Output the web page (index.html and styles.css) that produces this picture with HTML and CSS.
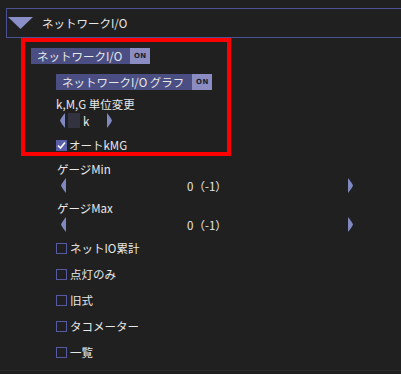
FILE: index.html
```html
<!DOCTYPE html>
<html lang="ja">
<head>
  <meta charset="UTF-8">
  <title>ネットワークI/O</title>
  <link rel="stylesheet" href="styles.css">
</head>
<body>
  <div class="panel">
    <div class="section-header">
      <svg class="caret" viewBox="0 0 25 12"><polygon points="0,0 25,0 12.5,12"/></svg>
      <span>ネットワークI/O</span>
    </div>

    <div class="section-body">
      <div class="toggle">
        <span class="toggle-label">ネットワークI/O</span>
        <span class="toggle-on">ON</span>
      </div>

      <div class="indent">
        <div class="toggle toggle-sub">
          <span class="toggle-label">ネットワークI/O グラフ</span>
          <span class="toggle-on">ON</span>
        </div>

        <div class="label unit-label">k,M,G 単位変更</div>
        <div class="selector">
          <svg class="arrow" viewBox="0 0 5 15"><path d="M5 0 L5 15 Q1 10 0 7.5 Q1 5 5 0Z"/></svg>
          <span class="swatch"></span>
          <span class="selector-value">k</span>
          <svg class="arrow" viewBox="0 0 5 15"><path d="M0 0 L0 15 Q4 10 5 7.5 Q4 5 0 0Z"/></svg>
        </div>

        <div class="check-row check-auto">
          <span class="check checked">
            <svg viewBox="0 0 11 11"><path d="M2 5.5 L4.5 8 L9 2.5" fill="none" stroke="#fff" stroke-width="1.6"/></svg>
          </span>
          <span>オートkMG</span>
        </div>

        <div class="label gauge-label">ゲージMin</div>
        <div class="slider">
          <svg class="arrow" viewBox="0 0 5 15"><path d="M5 0 L5 15 Q1 10 0 7.5 Q1 5 5 0Z"/></svg>
          <span class="slider-value">0（-1）</span>
          <svg class="arrow" viewBox="0 0 5 15"><path d="M0 0 L0 15 Q4 10 5 7.5 Q4 5 0 0Z"/></svg>
        </div>

        <div class="label gauge-label gauge-max">ゲージMax</div>
        <div class="slider">
          <svg class="arrow" viewBox="0 0 5 15"><path d="M5 0 L5 15 Q1 10 0 7.5 Q1 5 5 0Z"/></svg>
          <span class="slider-value">0（-1）</span>
          <svg class="arrow" viewBox="0 0 5 15"><path d="M0 0 L0 15 Q4 10 5 7.5 Q4 5 0 0Z"/></svg>
        </div>

        <div class="check-list">
          <div class="check-row"><span class="check"></span><span>ネットIO累計</span></div>
          <div class="check-row"><span class="check"></span><span>点灯のみ</span></div>
          <div class="check-row"><span class="check"></span><span>旧式</span></div>
          <div class="check-row"><span class="check"></span><span>タコメーター</span></div>
          <div class="check-row"><span class="check"></span><span>一覧</span></div>
        </div>
      </div>
    </div>

    <div class="footer-line"></div>

    <!-- annotation frame -->
    <div class="highlight"></div>
  </div>
</body>
</html>
```

FILE: styles.css
```css
* {
  margin: 0;
  padding: 0;
  box-sizing: border-box;
}

body {
  background-color: #202020;
  color: #e8e8e8;
  font-family: "Noto Sans CJK JP", "Noto Sans", sans-serif;
  font-size: 11.5px;
  line-height: 16px;
  overflow: hidden;
}

.panel {
  position: relative;
  height: 374px;
  padding-top: 8px;
}

/* Section header */
.section-header {
  display: flex;
  align-items: center;
  gap: 9px;
  height: 30px;
  margin-left: 6px;
  padding-left: 1px;
  border: 1px solid #4b5294;
  border-right: none;
  color: #e8e8e8;
}

.caret {
  width: 25px;
  height: 12px;
  fill: #8b8fc7;
}

.section-body {
  padding-left: 31px;
  padding-top: 10px;
}

/* ON toggles */
.toggle {
  display: flex;
  height: 16px;
}

.toggle-label {
  background-color: #4a4e82;
  padding: 0 8px 0 6px;
  line-height: 16px;
}

.toggle-on {
  width: 20px;
  background-color: #8a8cc2;
  color: #1e1e2a;
  font-family: "DejaVu Sans", sans-serif;
  font-weight: 700;
  font-size: 7px;
  letter-spacing: 0.5px;
  text-align: center;
  line-height: 17px;
}

.indent {
  padding-left: 25px;
}

.toggle-sub {
  margin-top: 10px;
}

.label {
  height: 16px;
}

.unit-label {
  margin-top: 6px;
}

/* Unit selector */
.selector {
  display: flex;
  align-items: center;
  height: 15px;
  margin-top: 1px;
  padding-left: 4px;
}

.arrow {
  width: 5px;
  height: 15px;
  fill: #8088c0;
}

.swatch {
  width: 12px;
  height: 15px;
  margin-left: 3px;
  background-color: #33333f;
}

.selector-value {
  width: 27px;
  padding-left: 3px;
}

/* Checkboxes */
.check-row {
  display: flex;
  align-items: center;
  gap: 3px;
  height: 26px;
}

.check-auto {
  height: 16px;
  margin-top: 9px;
  gap: 2px;
}

.check {
  width: 11px;
  height: 11px;
  border: 1px solid #555aa2;
}

.check.checked {
  background-color: #5a5ea8;
  border: none;
}

.check svg {
  display: block;
  width: 11px;
  height: 11px;
}

.gauge-label {
  margin-top: 8px;
  padding-left: 1px;
}

.gauge-max {
  margin-top: 6px;
}

/* Sliders */
.slider {
  display: flex;
  align-items: center;
  width: 297px;
  height: 17px;
  padding-left: 5px;
}

.slider-value {
  flex: 1;
  text-align: center;
}

.check-list {
  margin-top: 2px;
}

.footer-line {
  margin-top: 5px;
  border-top: 1px solid #2c2c2c;
}

/* Red annotation frame over the top part */
.highlight {
  position: absolute;
  left: 21px;
  top: 38px;
  width: 210px;
  height: 118px;
  border: 4px solid #ff0000;
}
```
